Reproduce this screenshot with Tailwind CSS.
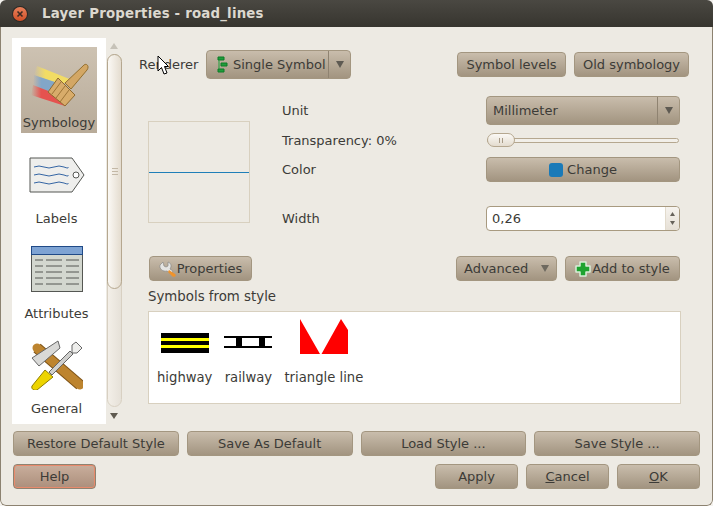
<!DOCTYPE html>
<html lang="en">
<head>
<meta charset="UTF-8">
<title>Layer Properties - road_lines</title>
<script src="https://cdn.jsdelivr.net/npm/@tailwindcss/browser@4"></script>
</head>
<body class="bg-[#f4f2ee]">
<div class="relative w-[713px] h-[506px] overflow-hidden flex flex-col rounded-t-[6px] rounded-b-[6px] font-['DejaVu_Sans',sans-serif] text-[13px] text-[#3c3b37]">

  <!-- title bar -->
  <div class="h-[27px] shrink-0 flex items-center bg-gradient-to-b from-[#4a4842] to-[#37352f]">
    <div class="ml-[12px] w-[16px] h-[16px] rounded-full bg-[#2b2a26] flex items-center justify-center">
      <div class="w-[14px] h-[14px] rounded-full bg-gradient-to-b from-[#e8805a] to-[#d04f26] flex items-center justify-center">
        <svg width="8" height="8" viewBox="0 0 8 8"><path d="M1.5 1.5L6.5 6.5M6.5 1.5L1.5 6.5" stroke="#3c2a22" stroke-width="1.6"/></svg>
      </div>
    </div>
    <span class="ml-[14px] font-bold text-[13.33px] text-[#dcd8cf] tracking-[0.2px]">Layer Properties - road_lines</span>
  </div>

  <!-- dialog body -->
  <div class="flex-1 flex flex-col bg-[#edeae3] border-x border-b border-[#8c8270] rounded-b-[6px] pl-[11px] pr-[12px]">
    <div class="flex h-[386px] mt-[11px]">

      <!-- page list -->
      <div class="w-[94px] shrink-0 bg-white flex flex-col items-start pl-[9px] pt-[9px]">
        <div class="w-[76px] h-[86px] bg-gradient-to-b from-[#cdc2b2] to-[#b8ab99] flex flex-col items-center">
          <svg width="76" height="64" viewBox="0 0 76 64">
            <defs>
              <linearGradient id="fadeY" x1="0" x2="1"><stop offset="0" stop-color="#f2dc64" stop-opacity="0"/><stop offset="0.3" stop-color="#f2dc64"/></linearGradient>
              <linearGradient id="fadeB" x1="0" x2="1"><stop offset="0" stop-color="#7fa3c9" stop-opacity="0"/><stop offset="0.3" stop-color="#82a6c8"/></linearGradient>
              <linearGradient id="fadeR" x1="0" x2="1"><stop offset="0" stop-color="#e8504e" stop-opacity="0"/><stop offset="0.3" stop-color="#e5524f"/></linearGradient>
            </defs>
            <path d="M16 19L51 33L38 38L13 28Z" fill="url(#fadeY)"/>
            <path d="M13 28L40 37L30 46L12 38Z" fill="url(#fadeB)"/>
            <path d="M12 38L30 45L44 59L10 48Z" fill="url(#fadeR)"/>
            <path d="M44 36L62 19C65 15 69 19 66 23L50 42Z" fill="#d3a765" stroke="#94702f" stroke-width="1"/>
            <path d="M27 45L37 31L54 48L44 59Z" fill="#d8ac6a" stroke="#8f6a30" stroke-width="1"/>
            <path d="M31 47L40 35M35 51L44 39M39 55L48 43" stroke="#9d7437" stroke-width="1"/>
          </svg>
          <span class="mt-[4px] leading-[16px] whitespace-nowrap">Symbology</span>
        </div>
        <div class="w-[71px] flex flex-col items-center">
          <svg class="mt-[24px]" width="56" height="36" viewBox="0 0 56 36">
            <path d="M1 1H43L55 18L43 35H1Z" fill="#eeeeec" stroke="#555753" stroke-width="1"/>
            <circle cx="47" cy="18" r="3" fill="#fff" stroke="#555753"/>
            <path d="M5 10q5-2 10 0t10 0t10 0t4 0M5 18q5-2 10 0t10 0t10 0t4 0M5 26q5-2 10 0t10 0t10 0t4 0" fill="none" stroke="#3465a4" stroke-width="1"/>
          </svg>
          <span class="mt-[18px] leading-[16px]">Labels</span>
          <svg class="mt-[19px]" width="52" height="46" viewBox="0 0 52 46">
            <rect x="0.5" y="0.5" width="51" height="45" fill="#d3d7cf" stroke="#555753"/>
            <rect x="0.5" y="0.5" width="51" height="8" fill="#7ea3d3" stroke="#204a87"/>
            <path d="M4 14H12M15 14H31M35 14H48M4 20H12M15 20H31M35 20H48M4 26H12M15 26H31M35 26H48M4 32H12M15 32H31M35 32H48M4 38H12M15 38H31M35 38H48" stroke="#555753" stroke-width="1"/>
          </svg>
          <span class="mt-[14px] leading-[16px]">Attributes</span>
          <svg class="mt-[18px]" width="52" height="50" viewBox="0 0 52 50">
            <path d="M6 8L49 45" stroke="#7e5317" stroke-width="11" stroke-linecap="butt"/>
            <path d="M6 8L49 45" stroke="#bd842f" stroke-width="9" stroke-linecap="round"/>
            <path d="M1 18L27 1L29 8L8 26Z" fill="#d9d9d7" stroke="#666" stroke-width="1"/>
            <path d="M18 32L39 11L42 14L21 35Z" fill="#cfcfcd" stroke="#666" stroke-width="1"/>
            <path d="M41 5L45 2L51 8L46 13L41 13Z" fill="#eeeeec" stroke="#666" stroke-width="1"/>
            <path d="M1 46L14 30L22 37L6 50C3 51 0 49 1 46Z" fill="#edd400" stroke="#8f7d00" stroke-width="1"/>
          </svg>
          <span class="mt-[11px] leading-[16px]">General</span>
        </div>
      </div>

      <!-- list scrollbar -->
      <div class="w-[16px] shrink-0 flex flex-col items-center">
        <svg class="mt-[5px]" width="8" height="6" viewBox="0 0 8 6"><path d="M4 0L8 6H0Z" fill="#c6c2b8"/></svg>
        <div class="mt-[5px] w-[15px] h-[353px] rounded-full border border-[#d8d0c2] bg-gradient-to-r from-[#f3efe8] to-[#e6e1d8] ml-[1px]">
          <div class="h-[235px] -mx-px -mt-px rounded-full border border-[#b5a78f] bg-gradient-to-r from-[#fbf9f5] to-[#e4dccf] flex flex-col items-center justify-center gap-[2px]">
            <div class="w-[6px] h-px bg-[#c3b8a6]"></div><div class="w-[6px] h-px bg-[#c3b8a6]"></div><div class="w-[6px] h-px bg-[#c3b8a6]"></div>
          </div>
        </div>
        <svg class="mt-[6px]" width="8" height="6" viewBox="0 0 8 6"><path d="M0 0H8L4 6Z" fill="#5f5a50"/></svg>
      </div>

      <!-- symbology page -->
      <div class="flex-1 flex flex-col">
        <div class="flex items-center mt-[12px] pl-[17px] pr-[11px] -mr-[11px] h-[29px]">
          <span class="w-[67px]">Renderer</span>
          <div class="w-[145px] h-[29px] flex items-center rounded-[4px] border border-[#a39680] bg-gradient-to-b from-[#c9bdac] to-[#a29480]">
            <svg class="ml-[9px]" width="12" height="19" viewBox="0 0 12 19"><path d="M2 2H8V5H2ZM5 8H11V11H5ZM2 14H8V17H2Z" fill="#1f9d3a" stroke="#0d7a27" stroke-width="1"/><path d="M3 5V14" stroke="#1f9d3a" stroke-width="1"/></svg>
            <span class="ml-[5px] flex-1 whitespace-nowrap">Single Symbol</span>
            <div class="w-[22px] h-full border-l border-[#8f8371] flex items-center justify-center">
              <svg width="8" height="7" viewBox="0 0 8 7"><path d="M0 0H8L4 7Z" fill="#5e5a52"/></svg>
            </div>
          </div>
          <div class="ml-auto flex gap-[8px] mr-[11px]">
            <div class="w-[109px] h-[25px] flex items-center justify-center rounded-[4px] border border-[#a39680] bg-gradient-to-b from-[#c9bdac] to-[#a29480]">Symbol levels</div>
            <div class="w-[115px] h-[25px] flex items-center justify-center rounded-[4px] border border-[#a39680] bg-gradient-to-b from-[#c9bdac] to-[#a29480]">Old symbology</div>
          </div>
        </div>

        <div class="flex pl-[26px] mt-[17px]">
          <div class="w-[102px] h-[102px] mt-[25px] shrink-0 border border-[#d8d0bf] flex items-center">
            <div class="w-full h-px bg-[#1f7fb8]"></div>
          </div>
          <div class="ml-[32px] w-[398px] flex flex-col">
            <div class="flex items-center h-[29px]">
              <span class="w-[204px]">Unit</span>
              <div class="w-[194px] h-full flex items-center rounded-[4px] border border-[#a39680] bg-gradient-to-b from-[#c9bdac] to-[#a29480]">
                <span class="ml-[6px] flex-1">Millimeter</span>
                <div class="w-[22px] h-full border-l border-[#8f8371] flex items-center justify-center">
                  <svg width="8" height="7" viewBox="0 0 8 7"><path d="M0 0H8L4 7Z" fill="#5e5a52"/></svg>
                </div>
              </div>
            </div>
            <div class="flex items-center h-[14px] mt-[8px]">
              <span class="w-[204px] whitespace-nowrap pt-[1px]">Transparency: 0%</span>
              <div class="relative ml-px w-[192px] h-[14px] flex items-center">
                <div class="w-full h-[5px] rounded-full border border-[#b5a78f] bg-[#f2efe9]"></div>
                <div class="absolute left-0 top-0 w-[28px] h-[14px] rounded-full border border-[#b5a78f] bg-gradient-to-b from-[#fbf9f5] to-[#e4dccf] flex items-center justify-center gap-[2px]">
                  <div class="w-px h-[5px] bg-[#a79a86]"></div><div class="w-px h-[5px] bg-[#a79a86]"></div>
                </div>
              </div>
            </div>
            <div class="flex items-center h-[25px] mt-[10px]">
              <span class="w-[204px]">Color</span>
              <div class="w-[194px] h-full flex items-center justify-center rounded-[4px] border border-[#a39680] bg-gradient-to-b from-[#c9bdac] to-[#a29480]">
                <div class="w-[14px] h-[14px] rounded-[3px] bg-[#1a7ab8]"></div>
                <span class="ml-[4px]">Change</span>
              </div>
            </div>
            <div class="flex items-center h-[25px] mt-[24px]">
              <span class="w-[204px]">Width</span>
              <div class="w-[194px] h-full flex items-stretch rounded-[4px] border border-[#a89a80] bg-white">
                <span class="flex-1 self-center ml-[5px]">0,26</span>
                <div class="w-[14px] flex flex-col items-center justify-around bg-gradient-to-b from-[#f6f3ee] to-[#e6e0d6] border-l border-[#e2dbcd] rounded-r-[4px] py-[3px]">
                  <svg width="5" height="4" viewBox="0 0 5 4"><path d="M2.5 0L5 4H0Z" fill="#66625a"/></svg>
                  <svg width="5" height="4" viewBox="0 0 5 4"><path d="M0 0H5L2.5 4Z" fill="#66625a"/></svg>
                </div>
              </div>
            </div>
          </div>
        </div>

        <div class="flex mt-[25px] pl-[27px] pr-[20px] h-[25px]">
          <div class="w-[103px] flex items-center justify-center rounded-[4px] border border-[#a39680] bg-gradient-to-b from-[#c9bdac] to-[#a29480]">
            <svg width="18" height="18" viewBox="0 0 18 18"><path d="M1 5L4 2L5 6L7 7L9 6L9 2C12 3 13 6 11 9L14 11L12 14L8 11C4 12 0 9 1 5Z" fill="#e4e4e2" stroke="#8a8a88" stroke-width="0.7"/><path d="M10 10L16 14C18 16 15 18 13 16L9 12Z" fill="#f0932b"/></svg>
            <span>Properties</span>
          </div>
          <div class="ml-auto w-[101px] flex items-center rounded-[4px] border border-[#a39680] bg-gradient-to-b from-[#c9bdac] to-[#a29480]">
            <span class="ml-[7px] flex-1">Advanced</span>
            <svg class="mr-[7px]" width="8" height="7" viewBox="0 0 8 7"><path d="M0 0H8L4 7Z" fill="#6e695f"/></svg>
          </div>
          <div class="ml-[8px] w-[115px] flex items-center justify-center rounded-[4px] border border-[#a39680] bg-gradient-to-b from-[#c9bdac] to-[#a29480]">
            <svg width="16" height="16" viewBox="0 0 16 16"><path d="M5 1H11V5H15V11H11V15H5V11H1V5H5Z" fill="#1ea32f" stroke="#d8eed8" stroke-width="1.5" stroke-linejoin="round"/></svg>
            <span class="ml-[1px]">Add to style</span>
          </div>
        </div>

        <div class="pl-[26px] mt-[8px] leading-[16px] text-[13.33px]">Symbols from style</div>

        <div class="ml-[26px] mr-[19px] mt-[6px] h-[93px] bg-white border border-[#d8d0bf] flex gap-[12px] pl-[8px] pt-[7px] text-[13.2px]">
          <div class="flex flex-col items-center">
            <svg width="48" height="36" viewBox="0 0 48 36"><rect y="14" width="48" height="20" fill="#000"/><rect y="19" width="48" height="3" fill="#ffff00"/><rect y="26" width="48" height="3" fill="#ffff00"/></svg>
            <span class="mt-[15px] leading-[16px]">highway</span>
          </div>
          <div class="flex flex-col items-center">
            <svg width="48" height="36" viewBox="0 0 48 36"><rect y="17" width="48" height="2" fill="#000"/><rect y="27" width="48" height="2" fill="#000"/><rect x="12" y="17" width="6" height="12" fill="#000"/><rect x="35" y="17" width="6" height="12" fill="#000"/></svg>
            <span class="mt-[15px] leading-[16px]">railway</span>
          </div>
          <div class="flex flex-col items-center">
            <svg width="48" height="36" viewBox="0 0 48 36"><path d="M0 0L20 35H0ZM21.5 35L41 0L48 11V35Z" fill="#ff0000"/></svg>
            <span class="mt-[15px] leading-[16px]">triangle line</span>
          </div>
        </div>
      </div>
    </div>

    <div class="grid grid-cols-4 gap-x-[8px] mt-[7px] pl-[1px]">
      <div class="h-[25px] flex items-center justify-center rounded-[4px] border border-[#a39680] bg-gradient-to-b from-[#c9bdac] to-[#a29480]">Restore Default Style</div>
      <div class="h-[25px] flex items-center justify-center rounded-[4px] border border-[#a39680] bg-gradient-to-b from-[#c9bdac] to-[#a29480]">Save As Default</div>
      <div class="h-[25px] flex items-center justify-center rounded-[4px] border border-[#a39680] bg-gradient-to-b from-[#c9bdac] to-[#a29480]">Load Style ...</div>
      <div class="h-[25px] flex items-center justify-center rounded-[4px] border border-[#a39680] bg-gradient-to-b from-[#c9bdac] to-[#a29480]">Save Style ...</div>
    </div>
    <div class="flex mt-[8px] pl-[1px] h-[25px]">
      <div class="w-[83px] flex items-center justify-center rounded-[4px] border border-[#8f8371] ring-1 ring-inset ring-[#e88a6c] bg-gradient-to-b from-[#c9ae9c] to-[#ac8f7c]">Help</div>
      <div class="ml-auto w-[83px] flex items-center justify-center rounded-[4px] border border-[#a39680] bg-gradient-to-b from-[#c9bdac] to-[#a29480]">Apply</div>
      <div class="ml-[8px] w-[83px] flex items-center justify-center rounded-[4px] border border-[#a39680] bg-gradient-to-b from-[#c9bdac] to-[#a29480]"><span><u>C</u>ancel</span></div>
      <div class="ml-[8px] w-[83px] flex items-center justify-center rounded-[4px] border border-[#a39680] bg-gradient-to-b from-[#c9bdac] to-[#a29480]"><span><u>O</u>K</span></div>
    </div>
  </div>

  <!-- mouse pointer -->
  <svg class="absolute left-[157px] top-[55px]" width="12" height="21" viewBox="0 0 12 21"><path d="M1 1V16L4.5 12.5L7 19L10 18L7.5 11.5H11.5Z" fill="#fff" stroke="#000" stroke-width="1"/></svg>
</div>
</body>
</html>
